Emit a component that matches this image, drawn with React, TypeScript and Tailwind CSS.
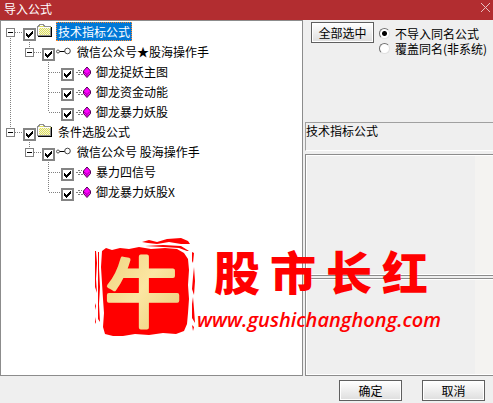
import { useState } from "react";

type Kind = "folder" | "key" | "formula";
type Line = "none" | "bar" | "tee" | "elbow" | "start";

type TreeItem = {
  id: string;
  label: string;
  kind: Kind;
  lines: Line[];
  selected?: boolean;
};

const items: TreeItem[] = [
  { id: "tech", label: "技术指标公式", kind: "folder", lines: ["start"], selected: true },
  { id: "tech-src", label: "微信公众号★股海操作手", kind: "key", lines: ["bar", "elbow"] },
  { id: "tech-1", label: "御龙捉妖主图", kind: "formula", lines: ["bar", "none", "tee"] },
  { id: "tech-2", label: "御龙资金动能", kind: "formula", lines: ["bar", "none", "tee"] },
  { id: "tech-3", label: "御龙暴力妖股", kind: "formula", lines: ["bar", "none", "elbow"] },
  { id: "pick", label: "条件选股公式", kind: "folder", lines: ["elbow"] },
  { id: "pick-src", label: "微信公众号 股海操作手", kind: "key", lines: ["none", "elbow"] },
  { id: "pick-1", label: "暴力四信号", kind: "formula", lines: ["none", "none", "tee"] },
  { id: "pick-2", label: "御龙暴力妖股X", kind: "formula", lines: ["none", "none", "elbow"] },
];

function Connector({ line, last }: { line: Line; last: boolean }) {
  const top = line === "start" ? 10 : 0;
  const bottom = line === "elbow" ? 10 : 20;
  return (
    <svg className={last ? "h-5 w-[22px] shrink-0" : "h-5 w-[19px] shrink-0"} shapeRendering="crispEdges">
      {line !== "none" && (
        <path d={`M9.5 ${top}V${bottom}`} stroke="#808080" strokeDasharray="1 1" />
      )}
      {last && <path d="M10 10.5H22" stroke="#808080" strokeDasharray="1 1" />}
    </svg>
  );
}

function ItemIcon({ kind }: { kind: Kind }) {
  if (kind === "folder") {
    return (
      <svg className="h-5 w-4 shrink-0" viewBox="0 0 16 20" shapeRendering="crispEdges">
        <path d="M1 5h1V4h5v1h7v9H1z" fill="#dede5a" />
        <path d="M2 6.500h12M2 8.500h12M2 10.500h12M2 12.500h12" stroke="#f4f4d8" strokeDasharray="1 1" />
        <path d="M3 7.500h11M3 9.500h11M3 11.500h11" stroke="#f4f4d8" strokeDasharray="1 1" />
        <path d="M.5 14V4.500H1.500V3.500H2.500V2.500H6.500V3.500H7.500V4.500H13.500" fill="none" stroke="#909090" />
        <path d="M1.500 13V5.500H13" fill="none" stroke="#fff" />
        <path d="M14.500 5V14.500H1" fill="none" stroke="#000" />
        <path d="M13.500 6V13.500H1" fill="none" stroke="#909090" />
      </svg>
    );
  }
  if (kind === "key") {
    return (
      <svg className="h-5 w-4 shrink-0" viewBox="0 0 16 20">
        <path d="M3 9.500H9" stroke="#000" />
        <circle cx="2" cy="9.500" r="1.500" fill="#fff" stroke="#555" />
        <circle cx="11.500" cy="9" r="2.800" fill="#fff" stroke="#444" />
      </svg>
    );
  }
  return (
    <svg className="h-5 w-4 shrink-0" viewBox="0 0 16 20">
      <path d="M3 8.500H7M1 10.500H7M3 12.500H8" stroke="#808080" strokeDasharray="2 1" shapeRendering="crispEdges" />
      <path d="M12 5L15.500 9V11.500L12 15.500L8.500 11.500V9z" fill="#f0f" stroke="#500050" />
      <path d="M9 10L12 12.500L15 9.500M12 12.500V15" fill="none" stroke="#a000a0" />
    </svg>
  );
}

function TreeRow({ item }: { item: TreeItem }) {
  const [checked, setChecked] = useState(true);
  const id = `item-${item.id}`;
  return (
    <li className="flex h-5 items-start">
      {item.lines.map((line, i) => {
        const last = i === item.lines.length - 1;
        return (
          <div key={i} className="relative flex shrink-0">
            <Connector line={line} last={last} />
            {last && item.kind !== "formula" && (
              <button
                aria-label={`收起 ${item.label}`}
                className="absolute top-1.5 left-[5px] flex size-[9px] items-center justify-center border border-[#808080] bg-white"
              >
                <span className="h-px w-[5px] bg-black" />
              </button>
            )}
          </div>
        );
      })}
      <span className="relative mt-1.5 size-[13px] shrink-0">
        <input
          id={id}
          type="checkbox"
          checked={checked}
          onChange={(e) => setChecked(e.target.checked)}
          className="block size-[13px] appearance-none border-2 border-[#848484] bg-white"
        />
        {checked && (
          <svg className="pointer-events-none absolute inset-0" viewBox="0 0 13 13" shapeRendering="crispEdges">
            <path d="M3 5h1v1h1v1h1V6h1V5h1V4h1V3h1v3H9v1H8v1H7v1H6v1H5V9H4V8H3z" fill="#000" />
          </svg>
        )}
      </span>
      <span className="ml-px flex">
        <ItemIcon kind={item.kind} />
      </span>
      <label
        htmlFor={id}
        className={
          item.selected
            ? "ml-[3px] border border-dotted border-[#ff8728] bg-[#0078d7] px-px leading-[17px] whitespace-nowrap text-white"
            : "ml-[3px] border border-transparent px-px leading-[17px] whitespace-nowrap"
        }
      >
        {item.label}
      </label>
    </li>
  );
}

function PushButton({ children }: { children: string }) {
  return (
    <button className="h-[21px] w-[63px] border border-[#5f5f5f] bg-linear-to-b from-white to-[#dedede] leading-[17px] shadow-[inset_0_0_0_1px_#fff]">
      {children}
    </button>
  );
}

function ModeRadio({ id, label, defaultChecked }: { id: string; label: string; defaultChecked?: boolean }) {
  return (
    <div className="flex h-[15px] items-center gap-[5px]">
      <input
        id={id}
        type="radio"
        name="mode"
        defaultChecked={defaultChecked}
        className="size-[11px] shrink-0 appearance-none rounded-full border border-t-[#707070] border-r-[#e0e0e0] border-b-[#e0e0e0] border-l-[#707070] bg-white checked:bg-[radial-gradient(circle,#000_2px,#fff_3px)]"
      />
      <label htmlFor={id} className="whitespace-nowrap">
        {label}
      </label>
    </div>
  );
}

function InfoPane({ className }: { className: string }) {
  return (
    <div className={`flex border border-r-0 border-[#8c8c8c] ${className}`}>
      <div className="flex flex-1 justify-end border border-r-0 border-white">
        <div className="w-[18px] bg-[#f4f3f1]" />
      </div>
    </div>
  );
}

function Brand() {
  return (
    <div className="pointer-events-none absolute top-[237px] left-[93px] flex text-[#f00]">
      <svg className="h-[102px] w-[104px] shrink-0 overflow-visible" viewBox="0 0 104 102">
        <g fill="#f00">
          <path d="M9 14L13 11L19 13L27 11L36 12L46 10L58 12L72 11L84 12L91 16L95 22L96 33L95 48L96 62L95 76L94 87L91 94L83 97L70 96L56 98L42 97L30 99L20 99L12 97L10 90L11 76L10 62L9 46L8 30z" />
          <path d="M49 5L56 3L64 5L74 2L88 1L95 4L97 7L88 7L76 5L64 7L55 6z" />
          <path d="M52 9L70 8L88 9L96 14L94 14L86 11L70 10z" />
          <path d="M2 14h1l1 12-1 16 1 14-2-6 0-20zM5 15h1v16l1 19-1 17 1 18-2-3 0-28zM2 66l1 3-1 4zM2 80l1 5-1 2z" />
          <path d="M99 15l2 1-1 10-1-2zM101 30l1 14-1 14-2-6 1-12zM100 60l1 12 1 14-3-5 0-14zM99 88l2 2-1 4z" />
        </g>
        <defs>
          <linearGradient id="gold" x1="0" y1="0" x2="1" y2="1">
            <stop offset="0" stopColor="#eccf78" />
            <stop offset="0.5" stopColor="#fbe6a2" />
            <stop offset="1" stopColor="#e8c972" />
          </linearGradient>
        </defs>
        <text
          x="50"
          y="84"
          textAnchor="middle"
          fill="url(#gold)"
          stroke="url(#gold)"
          strokeWidth="4"
          strokeLinejoin="round"
          className="font-['Noto_Sans_CJK_SC',sans-serif] text-[76px] font-normal"
        >
          牛
        </text>
      </svg>
      <div className="flex flex-col">
        <div className="flex gap-2.5 pl-[17px] font-['Noto_Sans_CJK_SC',sans-serif] text-[46px] leading-[67px] font-black">
          <span>股</span>
          <span>市</span>
          <span>长</span>
          <span>红</span>
        </div>
        <div className="pt-0.5 font-['Open_Sans',sans-serif] text-[20px] leading-[27px] font-semibold italic">
          www.gushichanghong.com
        </div>
      </div>
    </div>
  );
}

export default function App() {
  return (
    <div className="relative flex min-h-screen flex-col bg-[#efefef] font-['Noto_Sans_CJK_SC',sans-serif] text-[12px] leading-[15px] text-black">
      <header className="flex h-5 items-start justify-between bg-[#b22d30] pt-px pr-[3px] pl-1 text-white">
        <h1>导入公式</h1>
        <button aria-label="关闭" className="pt-0.5">
          <svg className="size-[9px]" viewBox="0 0 9 9">
            <path d="M0 0L9 9M9 0L0 9" stroke="#e8c0c1" />
          </svg>
        </button>
      </header>

      <main className="grid flex-1 grid-cols-[303fr_188fr] gap-0.5">
        <ul className="border border-[#8c8c8c] bg-white pt-px">
          {items.map((item) => (
            <TreeRow key={item.id} item={item} />
          ))}
        </ul>

        <section className="flex flex-col">
          <div className="flex h-[102px] items-start gap-[5px] pt-0.5 pl-1.5">
            <PushButton>全部选中</PushButton>
            <div className="pt-1">
              <ModeRadio id="skip" label="不导入同名公式" defaultChecked />
              <ModeRadio id="overwrite" label="覆盖同名(非系统)" />
            </div>
          </div>
          <div className="mb-[3px] h-[29px] border-t border-b border-l border-t-[#a0a0a0] border-b-white border-l-[#a0a0a0]">
            技术指标公式
          </div>
          <InfoPane className="flex-[122]" />
          <InfoPane className="mt-0.5 flex-[98]" />
        </section>
      </main>

      <footer className="flex h-[27px] justify-end gap-5 pt-1 pr-2">
        <PushButton>确定</PushButton>
        <PushButton>取消</PushButton>
      </footer>

      <Brand />
    </div>
  );
}
